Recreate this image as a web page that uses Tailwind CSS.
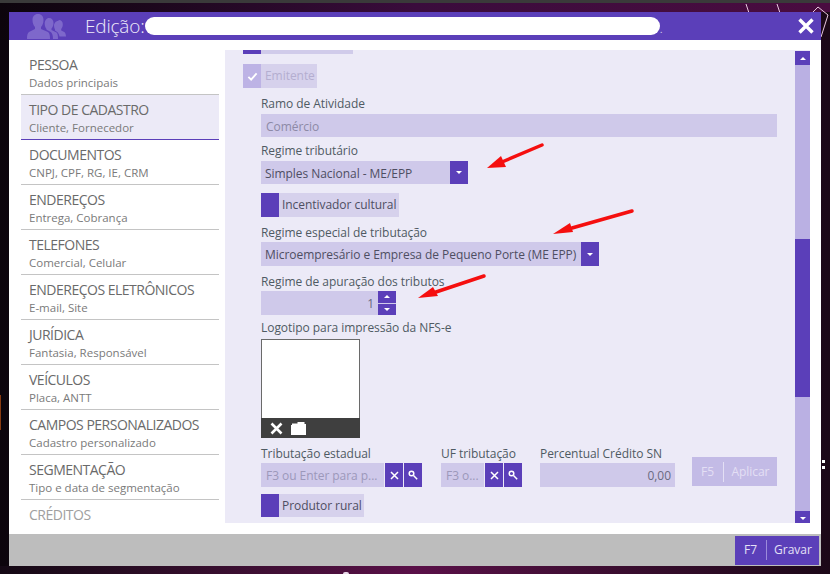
<!DOCTYPE html>
<html lang="pt-BR">
<head>
  <meta charset="UTF-8" />
  <title>Edição</title>
  <meta name="viewport" content="width=device-width, initial-scale=1" />
  <script src="https://cdn.jsdelivr.net/npm/@tailwindcss/browser@4"></script>
</head>
<body class="w-[830px] h-[574px] overflow-hidden relative font-['Open_Sans',sans-serif] bg-gradient-to-r from-[#0c040c] via-[#2c0a2c] to-[#1c0818]">
  <div class="h-[3px] bg-[#3a3a3a]"></div>

  <!-- Desktop wallpaper bits around the window -->
  <div class="absolute left-0 right-0 top-[3px] h-[9px] bg-gradient-to-r from-[#0c040c] via-[#3a0c3c] to-[#4a0c40]"></div>
  <div class="absolute left-0 right-0 bottom-0 h-[8px] bg-gradient-to-r from-[#140814] via-[#5a1048] to-[#1c0818]"></div>
  <div class="absolute left-0 top-[395px] w-px h-[35px] bg-[#8a3a10]"></div>
  <div class="absolute left-[343px] bottom-0 w-[6px] h-[2px] rounded-t-full bg-[#e8d8e8]"></div>
  <div class="absolute left-[822px] top-[460px] w-[3px] h-[3px] bg-white"></div>
  <div class="absolute left-[822px] top-[466px] w-[3px] h-[3px] bg-white"></div>
  <svg class="absolute left-[740px] top-[3px] w-[90px] h-[34px] text-[#e8c8e0]" viewBox="0 0 90 34" fill="none" stroke="currentColor" stroke-width="1">
    <path d="M6 1l3 9M37 1l3 9M81 34l7-22-10-8-6 6" />
  </svg>

  <!-- Window -->
  <div class="absolute left-[9px] top-[12px] w-[812px] h-[554px] flex flex-col bg-white">
    <!-- Title bar -->
    <div class="h-[28px] bg-[#5b3fb9] flex items-center shrink-0">
      <svg class="ml-[17px] w-[40px] h-[26px] text-[#7e68cb]" viewBox="0 0 40 26" fill="currentColor">
        <path d="M12 1c3.500 0 5.500 2.500 5.500 6 0 3-1 5.500-2.500 7v2l7 3c1.500 1 2 3 2 7H1c0-4 .5-6 2-7l6-3v-2c-1.500-1.500-2.500-4-2.500-7 0-3.500 2-6 5.500-6z" />
        <path d="M23 5c2.800 0 4.500 2 4.500 5 0 2.500-.8 4.500-2 5.500v1.500l5 2.500c1 .8 1.500 2.500 1.500 6.500h-5c0-4-1-6.500-3-7.500l-3.500-1.800v-.7c-1-1-1.800-3-1.800-5.500 0-3 1.800-5.500 4.300-5.500z" />
        <path d="M33 7c2.300 0 3.800 1.800 3.800 4.300 0 2-.6 3.700-1.600 4.700v1.500l3 1.500c1 .6 1.600 2 1.800 4.500h-6.500c-.5-2.500-1.500-4-3-5l-1.500-1v-1c-.6-1-1-2.300-1-3.700 0-2.500 1.700-4.800 4-4.800z" />
      </svg>
      <span class="ml-[19px] w-[60px] text-[19px] font-light tracking-[-0.2px] text-[#eeebfa] leading-none whitespace-nowrap">Edição:</span>
      <div class="w-[515px] h-[18px] rounded-full bg-white"></div>
      <span class="text-[9px] text-[#e4e0f6] self-end mb-[4px]">.</span>
      <svg class="ml-auto mr-[7px] w-[16px] h-[16px] text-white" viewBox="0 0 16 16" fill="none" stroke="currentColor" stroke-width="3.4">
        <path d="M1.5 1.5l13 13M14.5 1.5l-13 13" />
      </svg>
    </div>

    <!-- Body -->
    <div class="flex-1 flex min-h-0">
      <!-- Side menu -->
      <nav class="w-[198px] ml-[12px] mr-[6px] pt-[10px] overflow-hidden h-[490px] shrink-0">
        <div class="h-[44px] px-[8px] border-b border-[#c4c4c4] box-content">
          <div class="text-[14px] tracking-[-0.5px] leading-[20px] text-[#6a6a6a] pt-[5px]">PESSOA</div>
          <div class="text-[11.5px] leading-[16px] text-[#7a7a7a]">Dados principais</div>
        </div>
        <div class="h-[44px] px-[8px] border-b border-[#5b3fb9] bg-[#eceaf7] box-content">
          <div class="text-[14px] tracking-[-0.5px] leading-[20px] text-[#6a6a6a] pt-[5px]">TIPO DE CADASTRO</div>
          <div class="text-[11.5px] leading-[16px] text-[#7a7a7a]">Cliente, Fornecedor</div>
        </div>
        <div class="h-[44px] px-[8px] border-b border-[#c4c4c4] box-content">
          <div class="text-[14px] tracking-[-0.5px] leading-[20px] text-[#6a6a6a] pt-[5px]">DOCUMENTOS</div>
          <div class="text-[11.5px] leading-[16px] text-[#7a7a7a]">CNPJ, CPF, RG, IE, CRM</div>
        </div>
        <div class="h-[44px] px-[8px] border-b border-[#c4c4c4] box-content">
          <div class="text-[14px] tracking-[-0.5px] leading-[20px] text-[#6a6a6a] pt-[5px]">ENDEREÇOS</div>
          <div class="text-[11.5px] leading-[16px] text-[#7a7a7a]">Entrega, Cobrança</div>
        </div>
        <div class="h-[44px] px-[8px] border-b border-[#c4c4c4] box-content">
          <div class="text-[14px] tracking-[-0.5px] leading-[20px] text-[#6a6a6a] pt-[5px]">TELEFONES</div>
          <div class="text-[11.5px] leading-[16px] text-[#7a7a7a]">Comercial, Celular</div>
        </div>
        <div class="h-[44px] px-[8px] border-b border-[#c4c4c4] box-content">
          <div class="text-[14px] tracking-[-0.5px] leading-[20px] text-[#6a6a6a] pt-[5px]">ENDEREÇOS ELETRÔNICOS</div>
          <div class="text-[11.5px] leading-[16px] text-[#7a7a7a]">E-mail, Site</div>
        </div>
        <div class="h-[44px] px-[8px] border-b border-[#c4c4c4] box-content">
          <div class="text-[14px] tracking-[-0.5px] leading-[20px] text-[#6a6a6a] pt-[5px]">JURÍDICA</div>
          <div class="text-[11.5px] leading-[16px] text-[#7a7a7a]">Fantasia, Responsável</div>
        </div>
        <div class="h-[44px] px-[8px] border-b border-[#c4c4c4] box-content">
          <div class="text-[14px] tracking-[-0.5px] leading-[20px] text-[#6a6a6a] pt-[5px]">VEÍCULOS</div>
          <div class="text-[11.5px] leading-[16px] text-[#7a7a7a]">Placa, ANTT</div>
        </div>
        <div class="h-[44px] px-[8px] border-b border-[#c4c4c4] box-content">
          <div class="text-[14px] tracking-[-0.5px] leading-[20px] text-[#6a6a6a] pt-[5px]">CAMPOS PERSONALIZADOS</div>
          <div class="text-[11.5px] leading-[16px] text-[#7a7a7a]">Cadastro personalizado</div>
        </div>
        <div class="h-[44px] px-[8px] border-b border-[#c4c4c4] box-content">
          <div class="text-[14px] tracking-[-0.5px] leading-[20px] text-[#6a6a6a] pt-[5px]">SEGMENTAÇÃO</div>
          <div class="text-[11.5px] leading-[16px] text-[#7a7a7a]">Tipo e data de segmentação</div>
        </div>
        <div class="h-[22px] px-[8px] overflow-hidden">
          <div class="text-[14px] tracking-[-0.5px] leading-[20px] text-[#a0a0a0] pt-[5px]">CRÉDITOS</div>
        </div>
      </nav>

      <!-- Form panel -->
      <div class="w-[585px] h-[473px] mt-[10px] bg-[#eceaf7] flex overflow-hidden shrink-0">
        <div class="w-[570px] pl-[36px] text-[12px] tracking-[-0.05px] text-[#4f5a63]">
          <div class="-ml-[18px] w-[110px] h-[4px] bg-[#d0cbea]"><div class="w-[18px] h-[4px] bg-[#5b3fb9]"></div></div>

          <div class="-ml-[18px] mt-[10px] w-[74px] h-[24px] bg-[#d6d1ec] flex items-center">
            <div class="w-[18px] h-[24px] bg-[#bdb3e5] flex items-center justify-center">
              <svg class="w-[11px] h-[11px] text-white" viewBox="0 0 12 12" fill="none" stroke="currentColor" stroke-width="2"><path d="M1.500 6.500l3 3 6-7" /></svg>
            </div>
            <span class="ml-[4px] text-[#b4aed0]">Emitente</span>
          </div>

          <div class="mt-[6px] h-[18px] leading-[20px]">Ramo de Atividade</div>
          <div class="mt-[2px] w-[516px] h-[23px] bg-[#cfc9ea] px-[5px] leading-[25px] text-[#8d8aa6]">Comércio</div>

          <div class="mt-[4px] h-[18px] leading-[20px]">Regime tributário</div>
          <div class="mt-[2px] w-[207px] h-[23px] flex bg-[#cfc9ea]">
            <div class="flex-1 px-[4px] leading-[25px] text-[#4e4e62]">Simples Nacional - ME/EPP</div>
            <div class="w-[18px] bg-[#5b3fb9] flex items-center justify-center">
              <div class="w-0 h-0 border-x-[3px] border-x-transparent border-t-[3px] border-t-white"></div>
            </div>
          </div>

          <div class="mt-[9px] w-[138px] h-[24px] flex items-center bg-[#d6d1ec]">
            <div class="w-[18px] h-[24px] bg-[#5b3fb9]"></div>
            <span class="ml-[3px] text-[#4e4e62]">Incentivador cultural</span>
          </div>

          <div class="mt-[6px] h-[18px] leading-[20px]">Regime especial de tributação</div>
          <div class="mt-[1px] w-[338px] h-[24px] flex bg-[#cfc9ea]">
            <div class="flex-1 px-[4px] leading-[25px] text-[#4e4e62] whitespace-nowrap overflow-hidden">Microempresário e Empresa de Pequeno Porte (ME EPP)</div>
            <div class="w-[18px] bg-[#5b3fb9] flex items-center justify-center">
              <div class="w-0 h-0 border-x-[3px] border-x-transparent border-t-[3px] border-t-white"></div>
            </div>
          </div>

          <div class="mt-[6px] h-[18px] leading-[20px]">Regime de apuração dos tributos</div>
          <div class="mt-[1px] w-[135px] h-[24px] flex bg-[#cfc9ea]">
            <div class="flex-1 px-[4px] leading-[25px] text-right text-[#6a6a80]">1</div>
            <div class="w-[18px] flex flex-col gap-[1px]">
              <div class="flex-1 bg-[#5b3fb9] flex items-center justify-center">
                <div class="w-0 h-0 border-x-[3px] border-x-transparent border-b-[3px] border-b-white"></div>
              </div>
              <div class="flex-1 bg-[#5b3fb9] flex items-center justify-center">
                <div class="w-0 h-0 border-x-[3px] border-x-transparent border-t-[3px] border-t-white"></div>
              </div>
            </div>
          </div>

          <div class="mt-[3px] h-[18px] leading-[20px]">Logotipo para impressão da NFS-e</div>
          <div class="mt-[3px] w-[99px] h-[99px] flex flex-col border border-[#6a6a6a] bg-white">
            <div class="flex-1"></div>
            <div class="h-[20px] -m-[1px] mt-0 bg-[#3f3f3f] flex items-center pl-[9px] gap-[8px]">
              <svg class="w-[13px] h-[13px] text-white" viewBox="0 0 13 13" fill="none" stroke="currentColor" stroke-width="2.6"><path d="M1.500 1.500l10 10M11.500 1.500l-10 10" /></svg>
              <svg class="w-[15px] h-[13px] text-white" viewBox="0 0 15 13" fill="currentColor"><path d="M0 3h1V1.500h5.500V0h7v2H15v11H0z" /></svg>
            </div>
          </div>

          <div class="mt-[6px] flex">
            <div class="w-[161px]">
              <div class="h-[18px] leading-[20px]">Tributação estadual</div>
              <div class="mt-[1px] h-[24px] flex gap-[1px]">
                <div class="flex-1 bg-[#cfc9ea] px-[5px] leading-[25px] text-[#9c98ba] whitespace-nowrap overflow-hidden">F3 ou Enter para p...</div>
                <div class="w-[18px] bg-[#5b3fb9] flex items-center justify-center">
                  <svg class="w-[9px] h-[9px] text-white" viewBox="0 0 9 9" fill="none" stroke="currentColor" stroke-width="1.500"><path d="M1 1l7 7M8 1l-7 7" /></svg>
                </div>
                <div class="w-[18px] bg-[#5b3fb9] flex items-center justify-center">
                  <svg class="w-[10px] h-[10px] text-white" viewBox="0 0 10 10" fill="none" stroke="currentColor" stroke-width="1.500"><circle cx="3.500" cy="3.500" r="2.300" /><path d="M5.500 5.500l3.700 3.700" /></svg>
                </div>
              </div>
            </div>
            <div class="w-[81px] ml-[19px]">
              <div class="h-[18px] leading-[20px] whitespace-nowrap">UF tributação</div>
              <div class="mt-[1px] h-[24px] flex gap-[1px]">
                <div class="flex-1 bg-[#cfc9ea] px-[5px] leading-[25px] text-[#9c98ba] whitespace-nowrap overflow-hidden">F3 o...</div>
                <div class="w-[18px] bg-[#5b3fb9] flex items-center justify-center">
                  <svg class="w-[9px] h-[9px] text-white" viewBox="0 0 9 9" fill="none" stroke="currentColor" stroke-width="1.500"><path d="M1 1l7 7M8 1l-7 7" /></svg>
                </div>
                <div class="w-[18px] bg-[#5b3fb9] flex items-center justify-center">
                  <svg class="w-[10px] h-[10px] text-white" viewBox="0 0 10 10" fill="none" stroke="currentColor" stroke-width="1.500"><circle cx="3.500" cy="3.500" r="2.300" /><path d="M5.500 5.500l3.700 3.700" /></svg>
                </div>
              </div>
            </div>
            <div class="w-[135px] ml-[18px]">
              <div class="h-[18px] leading-[20px] whitespace-nowrap">Percentual Crédito SN</div>
              <div class="mt-[1px] h-[24px] bg-[#cfc9ea] px-[4px] leading-[25px] text-right text-[#6a6a80]">0,00</div>
            </div>
            <div class="w-[85px] h-[29px] ml-[17px] mt-[13px] bg-[#c3bbe6] flex items-center text-[#e3dff4]">
              <span class="w-[31px] text-center">F5</span>
              <span class="w-px h-[20px] bg-[#e3dff4]"></span>
              <span class="flex-1 text-center">Aplicar</span>
            </div>
          </div>

          <div class="mt-[7px] w-[103px] h-[23px] flex items-center bg-[#d6d1ec]">
            <div class="w-[18px] h-[23px] bg-[#5b3fb9]"></div>
            <span class="ml-[3px] text-[#4e4e62]">Produtor rural</span>
          </div>
        </div>

        <!-- Scrollbar -->
        <div class="w-[15px] h-[474px] mt-[1px] bg-[#bab0e3] flex flex-col">
          <div class="h-[14px] bg-[#5b3fb9] flex items-center justify-center">
            <div class="w-0 h-0 border-x-[3px] border-x-transparent border-b-[3px] border-b-white"></div>
          </div>
          <div class="h-[158px] mt-[174px] bg-[#5b3fb9]"></div>
          <div class="h-[14px] mt-auto bg-[#5b3fb9] flex items-center justify-center">
            <div class="w-0 h-0 border-x-[3px] border-x-transparent border-t-[3px] border-t-white"></div>
          </div>
        </div>
      </div>
    </div>

    <!-- Footer -->
    <div class="h-[32px] bg-[#bdbdbd] flex justify-end items-center pr-[2px] shrink-0">
      <div class="w-[84px] h-[29px] bg-[#5b3fb9] flex items-center text-[12px] text-[#e4e0f6]">
        <span class="w-[31px] text-center">F7</span>
        <span class="w-px h-[20px] bg-[#9c8bdb]"></span>
        <span class="flex-1 text-center">Gravar</span>
      </div>
    </div>
  </div>

  <!-- Red annotation arrows drawn over the screenshot -->
  <svg class="absolute left-0 top-0 w-[830px] h-[574px] pointer-events-none" viewBox="0 0 830 574" fill="#f50f0f" stroke="#f50f0f" stroke-linecap="round">
    <path d="M542 145L502 162" fill="none" stroke-width="3.500" />
    <path d="M487 168l14-12 5 11z" stroke="none" />
    <path d="M632 211L572 228" fill="none" stroke-width="3.500" />
    <path d="M553 234l17-11 3 9z" stroke="none" />
    <path d="M484 276L436 292" fill="none" stroke-width="3.500" />
    <path d="M418 298l15-11 5 9z" stroke="none" />
  </svg>
</body>
</html>
